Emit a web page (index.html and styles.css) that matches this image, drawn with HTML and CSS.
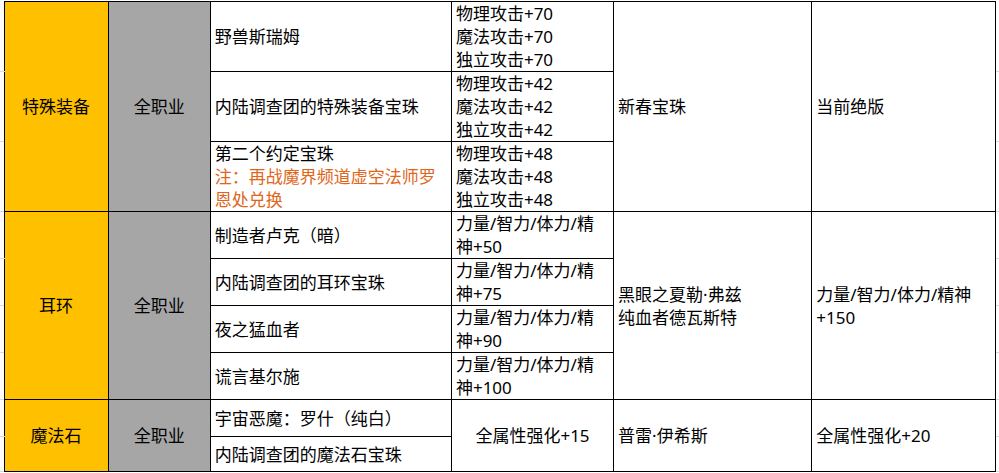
FILE: index.html
```html
<!DOCTYPE html>
<html lang="zh-CN">
<head>
<meta charset="utf-8">
<title>装备表</title>
<link rel="stylesheet" href="styles.css">
</head>
<body>
<table class="sheet">
  <colgroup>
    <col class="ce"><col class="c1"><col class="c2"><col class="c3"><col class="c4"><col class="c5"><col class="c6"><col class="ce">
  </colgroup>
  <tr class="r70">
    <td class="edge"></td>
    <td rowspan="3" class="cat">特殊装备</td>
    <td rowspan="3" class="job">全职业</td>
    <td>野兽斯瑞姆</td>
    <td>物理攻击+70<br>魔法攻击+70<br>独立攻击+70</td>
    <td rowspan="3">新春宝珠</td>
    <td rowspan="3">当前绝版</td>
    <td class="edge"></td>
  </tr>
  <tr class="r70">
    <td class="edge"></td>
    <td>内陆调查团的特殊装备宝珠</td>
    <td>物理攻击+42<br>魔法攻击+42<br>独立攻击+42</td>
    <td class="edge"></td>
  </tr>
  <tr class="r70">
    <td class="edge"></td>
    <td>第二个约定宝珠<br><span class="note">注：再战魔界频道虚空法师罗<br>恩处兑换</span></td>
    <td>物理攻击+48<br>魔法攻击+48<br>独立攻击+48</td>
    <td class="edge"></td>
  </tr>
  <tr class="r47">
    <td class="edge"></td>
    <td rowspan="4" class="cat">耳环</td>
    <td rowspan="4" class="job">全职业</td>
    <td>制造者卢克（暗）</td>
    <td>力量/智力/体力/精<br>神+50</td>
    <td rowspan="4">黑眼之夏勒·弗兹<br>纯血者德瓦斯特</td>
    <td rowspan="4">力量/智力/体力/精神<br>+150</td>
    <td class="edge"></td>
  </tr>
  <tr class="r47">
    <td class="edge"></td>
    <td>内陆调查团的耳环宝珠</td>
    <td>力量/智力/体力/精<br>神+75</td>
    <td class="edge"></td>
  </tr>
  <tr class="r47">
    <td class="edge"></td>
    <td>夜之猛血者</td>
    <td>力量/智力/体力/精<br>神+90</td>
    <td class="edge"></td>
  </tr>
  <tr class="r47">
    <td class="edge"></td>
    <td>谎言基尔施</td>
    <td>力量/智力/体力/精<br>神+100</td>
    <td class="edge"></td>
  </tr>
  <tr class="r37">
    <td class="edge"></td>
    <td rowspan="2" class="cat">魔法石</td>
    <td rowspan="2" class="job">全职业</td>
    <td>宇宙恶魔：罗什（纯白）</td>
    <td rowspan="2" class="center">全属性强化+15</td>
    <td rowspan="2">普雷·伊希斯</td>
    <td rowspan="2">全属性强化+20</td>
    <td class="edge"></td>
  </tr>
  <tr class="r35">
    <td class="edge"></td>
    <td>内陆调查团的魔法石宝珠</td>
    <td class="edge"></td>
  </tr>
</table>
</body>
</html>
```

FILE: styles.css
```css
html, body {
  margin: 0;
  padding: 0;
  background: #ffffff;
}

body {
  padding: 1px 0 0 0;
  font-family: "Noto Sans", "Noto Sans CJK SC", "Microsoft YaHei", sans-serif;
  font-size: 17px;
  color: #000000;
}

.sheet {
  border-collapse: collapse;
  table-layout: fixed;
  width: 1000px;
}

.ce { width: 4px; }
.c1 { width: 104px; }
.c2 { width: 102px; }
.c3 { width: 241px; }
.c4 { width: 162px; }
.c5 { width: 198px; }
.c6 { width: 184px; }

.sheet td {
  border: 1px solid #000000;
  padding: 0 4px;
  line-height: 23px;
  vertical-align: middle;
  text-align: left;
  white-space: nowrap;
  overflow: hidden;
}

.sheet td.edge {
  border: none;
  border-bottom: 1px solid #dadada;
  padding: 0;
}

.r70 { height: 70px; }
.r47 { height: 47px; }
.r37 { height: 37px; }
.r35 { height: 35px; }

.sheet td.cat {
  background: #ffc000;
  text-align: center;
}

.sheet td.job {
  background: #a6a6a6;
  text-align: center;
}

.sheet td.center {
  text-align: center;
}

.note {
  color: #e0661a;
}
```
